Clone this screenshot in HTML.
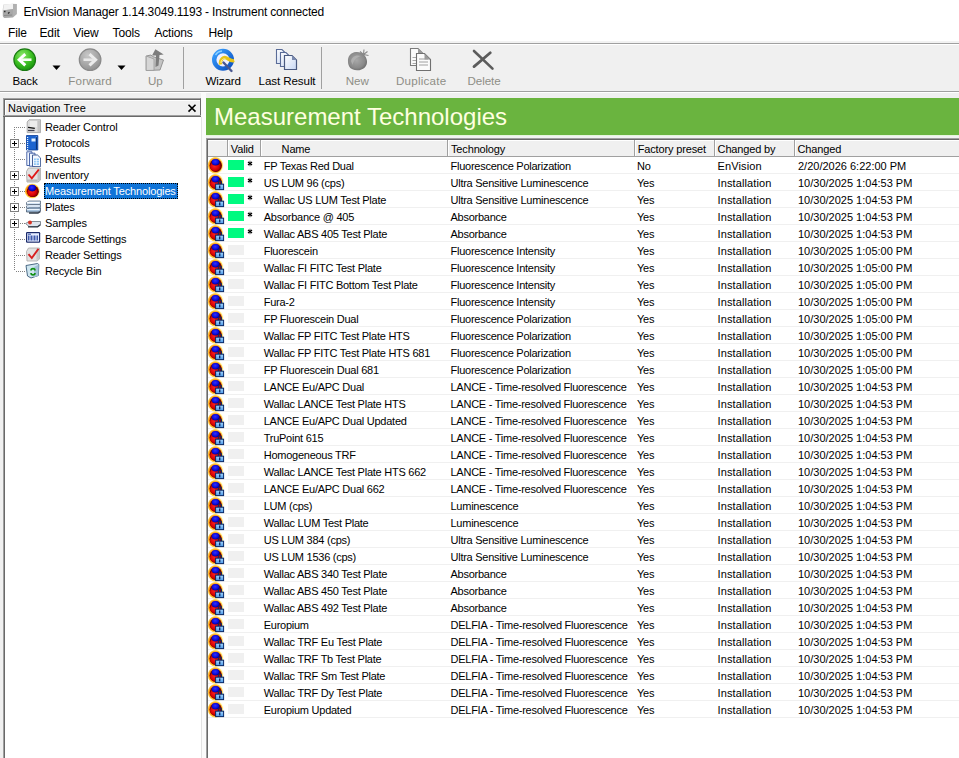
<!DOCTYPE html><html><head><meta charset="utf-8"><style>
*{margin:0;padding:0;box-sizing:border-box}
html,body{width:959px;height:758px;overflow:hidden;background:#f0f0f0;font-family:"Liberation Sans",sans-serif;color:#000}
.a{position:absolute}
.t{position:absolute;white-space:nowrap;line-height:1}
#title{left:0;top:0;width:959px;height:43px;background:#fff}
#tline{left:0;top:43px;width:959px;height:1px;background:#a0a0a0}
#tb{left:0;top:44px;width:959px;height:47px;background:#f0f0f0}
#tbline{left:0;top:91px;width:959px;height:1px;background:#a0a0a0}
.sep{position:absolute;top:47px;width:1px;height:42px;background:#a0a0a0}
.lbl{font-size:11.6px;top:75px;letter-spacing:-0.1px}
.dis{color:#8e8e86}
.tree{font-size:11px;letter-spacing:-0.15px}
.g{font-size:11px;letter-spacing:-0.25px}
.gd{font-size:11px;letter-spacing:0px}
.gt{font-size:11px;letter-spacing:-0.25px}
.gb{font-size:11px;letter-spacing:0.1px}
.rl{position:absolute;left:208px;width:751px;height:1px;background:#f0f0f0}
.hs{position:absolute;top:140px;width:1px;height:16px;background:#d5d5d5}
.vs{position:absolute;width:16px;height:10px}
</style></head><body>
<svg width="0" height="0" style="position:absolute"><defs>
<radialGradient id="glow" cx="45%" cy="50%" r="50%"><stop offset="0.55" stop-color="#ff6000"/><stop offset="0.74" stop-color="#ff9a10"/><stop offset="0.88" stop-color="#ffd040" stop-opacity="0.9"/><stop offset="1" stop-color="#ffee90" stop-opacity="0.15"/></radialGradient>
<radialGradient id="red" cx="40%" cy="45%" r="60%"><stop offset="0" stop-color="#ff2020"/><stop offset="0.7" stop-color="#d00000"/><stop offset="1" stop-color="#700000"/></radialGradient>
<radialGradient id="blue" cx="45%" cy="40%" r="60%"><stop offset="0" stop-color="#3030ff"/><stop offset="0.7" stop-color="#0808d8"/><stop offset="1" stop-color="#000070"/></radialGradient>
<linearGradient id="lockg" x1="0" y1="0" x2="0" y2="1"><stop offset="0" stop-color="#a8d8ff"/><stop offset="1" stop-color="#4a98e8"/></linearGradient>
</defs></svg>
<div id="title" class="a"></div><div class="a" style="left:0;top:41px;width:959px;height:2px;background:#f2f2f2"></div><div id="tline" class="a"></div><div class="a" style="left:0;top:44px;width:959px;height:1px;background:#fff;z-index:1"></div>
<svg class="a" style="left:0px;top:0px" width="20" height="20" viewBox="0 0 20 20"><path d="M3.5 4.5 L13 3.8 L16.8 4 V14 L13 17.5 L4 18 L2.6 16 V10Z" fill="#cfcfcf"/><path d="M4 4.5 L13 3.8 V9 L3.2 10.2Z" fill="#f2f2f2"/><path d="M13 4 L16.8 4 V14 L13 17.3Z" fill="#b0b0b0"/><path d="M3 10.5 L13 9 V17.3 L4.5 18 L3 16.5Z" fill="#a8a8a8"/><path d="M4 11.5 h1.5 M8 13.5 L9.5 12.2" stroke="#303030" stroke-width="1.3"/><path d="M4 15.5 L12 15" stroke="#8a8a8a" stroke-width="1.2"/></svg>
<div class="t" style="left:23.5px;top:6px;font-size:12px;letter-spacing:-0.17px">EnVision Manager 1.14.3049.1193 - Instrument connected</div>
<div class="t" style="left:8px;top:27px;font-size:12px;letter-spacing:-0.15px">File</div>
<div class="t" style="left:39.5px;top:27px;font-size:12px;letter-spacing:-0.15px">Edit</div>
<div class="t" style="left:73.3px;top:27px;font-size:12px;letter-spacing:-0.15px">View</div>
<div class="t" style="left:112.6px;top:27px;font-size:12px;letter-spacing:-0.15px">Tools</div>
<div class="t" style="left:154.4px;top:27px;font-size:12px;letter-spacing:-0.15px">Actions</div>
<div class="t" style="left:208.4px;top:27px;font-size:12px;letter-spacing:-0.15px">Help</div>
<div id="tb" class="a"></div><div id="tbline" class="a"></div><div class="a" style="left:0;top:92px;width:959px;height:1px;background:#fff"></div>
<div class="sep" style="left:183px"></div><div class="sep" style="left:321px"></div>
<svg class="a" style="left:0px;top:44px" width="180" height="30" viewBox="0 44 180 30">
<defs><radialGradient id="gb" cx="40%" cy="30%" r="75%"><stop offset="0" stop-color="#8ce86a"/><stop offset="0.55" stop-color="#3cbf22"/><stop offset="1" stop-color="#14900a"/></radialGradient>
<radialGradient id="gg" cx="40%" cy="30%" r="75%"><stop offset="0" stop-color="#c8c8c8"/><stop offset="0.6" stop-color="#a6a6a6"/><stop offset="1" stop-color="#8e8e8e"/></radialGradient></defs>
<circle cx="24.7" cy="59.7" r="10.8" fill="url(#gb)" stroke="#1a7a12" stroke-width="1.2"/>
<path d="M25.3 54.2 L19.2 59.7 L25.3 65.4" fill="none" stroke="#fff" stroke-width="3" stroke-linejoin="miter" stroke-linecap="butt"/>
<path d="M21 59.7 H31.5" stroke="#f4fff0" stroke-width="2.6"/>
<circle cx="90.1" cy="59.7" r="10.8" fill="url(#gg)" stroke="#8a8a8a" stroke-width="1.2"/>
<path d="M89.5 54.2 L95.6 59.7 L89.5 65.4" fill="none" stroke="#ececec" stroke-width="3"/>
<path d="M83.5 59.7 H94" stroke="#e8e8e8" stroke-width="2.6"/>
<path d="M52.5 65.5 H60.5 L56.5 70Z" fill="#000"/>
<path d="M117.5 65.5 H125.5 L121.5 70Z" fill="#000"/>
<path d="M146.2 56 L151 55 L152.5 56.5 L163.5 60 L160 70 L146.2 70.5Z" fill="#c4c4c4" stroke="#8c8c8c" stroke-width="0.9"/>
<path d="M146.2 56 L154 59 L154 70.3 L146.2 70.5Z" fill="#d6d6d6" stroke="#9a9a9a" stroke-width="0.8"/>
<path d="M152 55.5 L155.4 49.3 L163.7 54.5 L159.5 55 L158.5 65.5 L155.5 67 L156 55.5Z" fill="#7c7c7c"/>
</svg>
<div class="t lbl" style="left:12.4px">Back</div>
<div class="t lbl dis" style="left:68.3px;letter-spacing:0.15px">Forward</div>
<div class="t lbl dis" style="left:148px">Up</div>
<svg class="a" style="left:200px;top:44px" width="310" height="30" viewBox="200 44 310 30">
<defs><linearGradient id="wz" x1="0" y1="0" x2="1" y2="1"><stop offset="0" stop-color="#3aa0ff"/><stop offset="1" stop-color="#0a4fc0"/></linearGradient>
<linearGradient id="dc" x1="0" y1="0" x2="1" y2="1"><stop offset="0" stop-color="#ffffff"/><stop offset="1" stop-color="#c8d8f4"/></linearGradient>
<radialGradient id="nw" cx="45%" cy="45%" r="60%"><stop offset="0" stop-color="#a8a8a8"/><stop offset="0.7" stop-color="#8a8a8a"/><stop offset="1" stop-color="#6a6a6a"/></radialGradient></defs>
<circle cx="223" cy="59.8" r="8.8" fill="#f0f0ff" stroke="url(#wz)" stroke-width="4.4"/>
<path d="M215.5 55 A8.8 8.8 0 0 1 222 51" fill="none" stroke="#8cd0ff" stroke-width="1.4"/>
<path d="M220.5 64.5 C220 59 223.5 56.5 226.5 58 C229 59.3 231 61.5 234.2 60.5" fill="none" stroke="#e8c418" stroke-width="3.4"/>
<path d="M221 63 C221 60 223 58.3 225.5 59" fill="none" stroke="#fff4a0" stroke-width="1"/>
<path d="M223.5 62.5 L231.5 71" stroke="#4a5890" stroke-width="2.4" stroke-linecap="round"/>
<path d="M276.5 49.5 H282 L285 52.5 V63.5 H276.5Z" fill="url(#dc)" stroke="#5a6c98" stroke-width="1.1"/>
<path d="M280.5 52.5 H286 L289 55.5 V66.5 H280.5Z" fill="url(#dc)" stroke="#5a6c98" stroke-width="1.1"/>
<path d="M284.5 55.5 H292 L296.5 60 V69.5 H284.5Z" fill="url(#dc)" stroke="#4a5a80" stroke-width="1.2"/>
<path d="M292 55.5 V60 H296.5" fill="#7a8ab0"/>
<path d="M348 62 C347.5 56 351 52.5 356 52 C362 51.5 366.5 55.5 367 61 C367.5 66.5 363 70.5 357 70.3 C351 70 348.3 67 348 62Z" fill="url(#nw)"/>
<path d="M351 61 C352 56 357 54.5 361 56 C357 57 353.5 60 352.5 65Z" fill="#b4b4b4" opacity="0.8"/>
<path d="M363.5 54.5 L364 49.5 M363.5 54.5 L367.5 51.5 M363.5 54.5 L368.5 55.5 M363.5 54.5 L360 51.5" stroke="#8a8a8a" stroke-width="1.1"/>
<path d="M410.5 48.5 H418 L423.5 54 V65.5 H410.5Z" fill="#fbfbfb" stroke="#7c7c7c" stroke-width="1.1"/>
<path d="M418 48.5 V54 H423.5" fill="#9a9a9a"/>
<path d="M412.5 57.5h4M412.5 60.5h4M412.5 63.5h4" stroke="#a8a8a8" stroke-width="1"/>
<path d="M416.5 53.5 H424.5 L430.5 59.5 V70.5 H416.5Z" fill="#fbfbfb" stroke="#707070" stroke-width="1.1"/>
<path d="M424.5 53.5 V59.5 H430.5" fill="#9a9a9a"/>
<path d="M419 59h9M419 62h9M419 65h9" stroke="#a0a0a0" stroke-width="1"/>
<path d="M474 51 L492.5 68.6" stroke="#5c5c5c" stroke-width="2.6" stroke-linecap="round"/>
<path d="M490.3 52.8 L474 66.6" stroke="#5c5c5c" stroke-width="2.8" stroke-linecap="round"/>
</svg>
<div class="t lbl" style="left:205.5px">Wizard</div>
<div class="t lbl" style="left:258.6px">Last Result</div>
<div class="t lbl dis" style="left:345.8px">New</div>
<div class="t lbl dis" style="left:395.9px;letter-spacing:0.25px">Duplicate</div>
<div class="t lbl dis" style="left:467.6px">Delete</div>
<div class="a" style="left:201px;top:93px;width:5px;height:665px;background:#fbfbfb"></div>
<div class="a" style="left:3px;top:117px;width:199px;height:641px;background:#fff;border-left:1px solid #a0a0a0;border-right:1px solid #e3e3e3"><div style="position:absolute;left:0;top:0;width:1px;height:100%;background:#696969"></div></div>
<div class="a" style="left:3px;top:98px;width:198px;height:19px;background:#f0f0f0;border-top:1px solid #a0a0a0;border-left:1px solid #a0a0a0;border-right:1px solid #696969"></div>
<div class="a" style="left:4px;top:99px;width:196px;height:1px;background:#696969"></div>
<div class="a" style="left:4px;top:99px;width:1px;height:18px;background:#696969"></div>
<div class="a" style="left:5px;top:100px;width:195px;height:1px;background:#fff"></div>
<div class="a" style="left:5px;top:100px;width:1px;height:15px;background:#fff"></div>
<div class="a" style="left:3px;top:115px;width:198px;height:1px;background:#a0a0a0"></div><div class="a" style="left:3px;top:116px;width:198px;height:1px;background:#696969"></div>
<div class="t" style="left:8px;top:102.5px;font-size:11px;letter-spacing:0.05px">Navigation Tree</div>
<svg class="a" style="left:187px;top:103px" width="10" height="10" viewBox="0 0 10 10"><path d="M1.5 1.8 L8.5 8.6 M8.5 1.8 L1.5 8.6" stroke="#000" stroke-width="1.6"/></svg>
<div class="a" style="left:14px;top:127px;width:1px;height:144px;background-image:linear-gradient(#808080 50%,transparent 50%);background-size:1px 2px"></div>
<div class="a" style="left:16px;top:127px;width:9px;height:1px;background-image:linear-gradient(90deg,#808080 50%,transparent 50%);background-size:2px 1px"></div>
<svg class="a" style="left:25px;top:119px" width="16" height="16" viewBox="0 0 16 16"><path d="M2.2 3 L4 0.8 H15.6 V13.6 H2.2Z" fill="#dedede" stroke="#a4a4a4" stroke-width="0.9"/><path d="M5 2 H12 V8 H5Z" fill="#ececec"/><path d="M12.5 1.5 H15 V13 H12.5Z" fill="#c4c4c4"/><path d="M3 8.4 L9.8 9.4" stroke="#101010" stroke-width="1.3"/><path d="M3 11.5 H9.5" stroke="#404050" stroke-width="1.3"/></svg>
<div class="t tree" style="left:45px;top:122px">Reader Control</div>
<div class="a" style="left:16px;top:143px;width:9px;height:1px;background-image:linear-gradient(90deg,#808080 50%,transparent 50%);background-size:2px 1px"></div>
<div class="a" style="left:10px;top:139px;width:9px;height:9px;background:#fff;border:1px solid #808080"></div>
<div class="a" style="left:12px;top:143px;width:5px;height:1px;background:#000"></div><div class="a" style="left:14px;top:141px;width:1px;height:5px;background:#000"></div>
<svg class="a" style="left:25px;top:135px" width="16" height="16" viewBox="0 0 16 16"><path d="M1.5 0.5 H12.8 V15 H1.5Z" fill="#1c64d0" stroke="#0a3c98" stroke-width="0.8"/><path d="M11.5 1 V14.5" stroke="#0a3478" stroke-width="1.2"/><rect x="2" y="2" width="1.2" height="1" fill="#e8f4ff"/><rect x="2" y="4" width="1.2" height="1" fill="#e8f4ff"/><rect x="2" y="6" width="1.2" height="1" fill="#e8f4ff"/><rect x="2" y="8" width="1.2" height="1" fill="#e8f4ff"/><rect x="2" y="10" width="1.2" height="1" fill="#e8f4ff"/><rect x="2" y="12" width="1.2" height="1" fill="#e8f4ff"/><rect x="2" y="14" width="1.2" height="1" fill="#e8f4ff"/><path d="M6.5 3.5 H10.5 V6.5 H6.5Z" fill="#e0f0ff"/><path d="M10.5 2 L12 1.5" stroke="#5aa0ff"/></svg>
<div class="t tree" style="left:45px;top:138px">Protocols</div>
<div class="a" style="left:16px;top:159px;width:9px;height:1px;background-image:linear-gradient(90deg,#808080 50%,transparent 50%);background-size:2px 1px"></div>
<svg class="a" style="left:25px;top:151px" width="16" height="16" viewBox="0 0 16 16"><path d="M1.8 0.8 H7 V14.5 H1.8Z" fill="#f0f6ff" stroke="#3a58a0" stroke-width="0.9"/><path d="M4.5 2.2 H10 V15.2 H4.5Z" fill="#f0f6ff" stroke="#3a58a0" stroke-width="0.9"/><path d="M7.5 4 H12.5 L15.6 7 V15.6 H7.5Z" fill="#f4f8ff" stroke="#34508c" stroke-width="0.9"/><path d="M9 7.5 H14 V14 H9Z" fill="#8cc4f4"/><path d="M9 9.6h5M9 11.8h5M11.3 7.5v6.5" stroke="#ffffff" stroke-width="0.7"/></svg>
<div class="t tree" style="left:45px;top:154px">Results</div>
<div class="a" style="left:16px;top:175px;width:9px;height:1px;background-image:linear-gradient(90deg,#808080 50%,transparent 50%);background-size:2px 1px"></div>
<div class="a" style="left:10px;top:171px;width:9px;height:9px;background:#fff;border:1px solid #808080"></div>
<div class="a" style="left:12px;top:175px;width:5px;height:1px;background:#000"></div><div class="a" style="left:14px;top:173px;width:1px;height:5px;background:#000"></div>
<svg class="a" style="left:25px;top:167px" width="16" height="16" viewBox="0 0 16 16"><path d="M1.5 4.5 L3.5 1 H15.5 V13 L13 15 H2Z" fill="#e2e2e2" stroke="#a0a0a0" stroke-width="0.8"/><path d="M12.5 1.5 H15.5 V13 L12.5 14Z" fill="#c0c0c0"/><path d="M2 12.5 H12.5 V14.5 H2Z" fill="#b8b8b8"/><path d="M3.5 7.5 L6.8 11.3 L13.8 2.5" fill="none" stroke="#e01818" stroke-width="1.9"/></svg>
<div class="t tree" style="left:45px;top:170px">Inventory</div>
<div class="a" style="left:16px;top:191px;width:9px;height:1px;background-image:linear-gradient(90deg,#808080 50%,transparent 50%);background-size:2px 1px"></div>
<div class="a" style="left:10px;top:187px;width:9px;height:9px;background:#fff;border:1px solid #808080"></div>
<div class="a" style="left:12px;top:191px;width:5px;height:1px;background:#000"></div><div class="a" style="left:14px;top:189px;width:1px;height:5px;background:#000"></div>
<svg class="a" style="left:25px;top:183px" width="16" height="16" viewBox="0 0 16 16"><ellipse cx="7.8" cy="8" rx="8" ry="7.8" fill="url(#glow)"/><ellipse cx="7.8" cy="8.3" rx="6" ry="5.8" fill="#700000"/><ellipse cx="7.8" cy="9.2" rx="5.4" ry="4.6" fill="url(#red)"/><ellipse cx="7.2" cy="5.1" rx="3.8" ry="3.3" fill="url(#blue)"/></svg>
<div class="a" style="left:44px;top:183px;width:134px;height:16px;background:#0f74d8;outline:1px dotted #000;outline-offset:-1px"></div>
<div class="t tree" style="left:45px;top:186px;color:#fff">Measurement Technologies</div>
<div class="a" style="left:16px;top:207px;width:9px;height:1px;background-image:linear-gradient(90deg,#808080 50%,transparent 50%);background-size:2px 1px"></div>
<div class="a" style="left:10px;top:203px;width:9px;height:9px;background:#fff;border:1px solid #808080"></div>
<div class="a" style="left:12px;top:207px;width:5px;height:1px;background:#000"></div><div class="a" style="left:14px;top:205px;width:1px;height:5px;background:#000"></div>
<svg class="a" style="left:25px;top:199px" width="16" height="16" viewBox="0 0 16 16"><path d="M1.5 3.5 L4 2 H15.5 V5 L13 5.8 H1.5Z" fill="#d4e4f4" stroke="#5a6c80" stroke-width="0.8"/><path d="M2 3.5 H14.5" stroke="#ffffff" stroke-width="0.9"/><path d="M1.5 7 L4 5.5 H15.5 V8.5 L13 9.3 H1.5Z" fill="#b8d0ea" stroke="#5a6c80" stroke-width="0.8"/><path d="M2 7 H14.5" stroke="#ffffff" stroke-width="0.9"/><path d="M1.5 10.5 L4 9 H15.5 V12 L13 13 H1.5Z" fill="#a8c4e0" stroke="#4a5a70" stroke-width="0.8"/><path d="M2 10.5 H14.5" stroke="#f0f8ff" stroke-width="0.9"/><path d="M4 14 H13 L15.5 12.5" fill="none" stroke="#303c4c" stroke-width="1.3"/></svg>
<div class="t tree" style="left:45px;top:202px">Plates</div>
<div class="a" style="left:16px;top:223px;width:9px;height:1px;background-image:linear-gradient(90deg,#808080 50%,transparent 50%);background-size:2px 1px"></div>
<div class="a" style="left:10px;top:219px;width:9px;height:9px;background:#fff;border:1px solid #808080"></div>
<div class="a" style="left:12px;top:223px;width:5px;height:1px;background:#000"></div><div class="a" style="left:14px;top:221px;width:1px;height:5px;background:#000"></div>
<svg class="a" style="left:25px;top:215px" width="16" height="16" viewBox="0 0 16 16"><g transform="translate(0,3)"><path d="M0.5 5.5 L4 3.5 H15.5 V6.5 L12.5 8.5 H4Z" fill="#dde4ec" stroke="#6a747e" stroke-width="0.8"/><path d="M3 8.8 H12.5 L15.5 6.8" fill="none" stroke="#2a3440" stroke-width="1.3"/><circle cx="5" cy="4.5" r="1.9" fill="#d83020"/></g></svg>
<div class="t tree" style="left:45px;top:218px">Samples</div>
<div class="a" style="left:16px;top:239px;width:9px;height:1px;background-image:linear-gradient(90deg,#808080 50%,transparent 50%);background-size:2px 1px"></div>
<svg class="a" style="left:25px;top:231px" width="16" height="16" viewBox="0 0 16 16"><rect x="1" y="1" width="14.2" height="10.8" rx="1.2" fill="#1a2a6a"/><rect x="2.2" y="2.2" width="11.8" height="8.4" fill="#e4ecff"/><path d="M3.5 4.5v5M5 4.5v5M6.5 4.5v5M8 4.5v5M9.5 4.5v5M11 4.5v5M12.5 4.5v5" stroke="#2a48a0" stroke-width="0.9"/><path d="M3 3.2h3" stroke="#2a48a0"/></svg>
<div class="t tree" style="left:45px;top:234px">Barcode Settings</div>
<div class="a" style="left:16px;top:255px;width:9px;height:1px;background-image:linear-gradient(90deg,#808080 50%,transparent 50%);background-size:2px 1px"></div>
<svg class="a" style="left:25px;top:247px" width="16" height="16" viewBox="0 0 16 16"><path d="M1.5 4.5 L3.5 1 H14.5 V12 L12 14 H2Z" fill="#e2e2e2" stroke="#a8a8a8" stroke-width="0.8"/><path d="M11.5 1.5 H14.5 V12 L11.5 13Z" fill="#c8c8c8"/><path d="M3.5 7.2 L6.8 11 L13.5 1.8" fill="none" stroke="#d82020" stroke-width="1.9"/></svg>
<div class="t tree" style="left:45px;top:250px">Reader Settings</div>
<div class="a" style="left:16px;top:271px;width:9px;height:1px;background-image:linear-gradient(90deg,#808080 50%,transparent 50%);background-size:2px 1px"></div>
<svg class="a" style="left:25px;top:263px" width="16" height="16" viewBox="0 0 16 16"><path d="M1 2.5 L12.5 0.5 L13.8 1.5 L13.4 12.5 L6 15 L2.5 13Z" fill="#cfe6f0" stroke="#3a5a78" stroke-width="0.9"/><path d="M9 4 L13.5 1.5 V12.5 L9 14.5Z" fill="#a4c4d8"/><path d="M6 7.5 C6 5 10 5 10 7.5 M10 10 C10 12.5 6 12.5 6 10" fill="none" stroke="#109010" stroke-width="1.6"/></svg>
<div class="t tree" style="left:45px;top:266px">Recycle Bin</div>
<div class="a" style="left:206px;top:98px;width:753px;height:37px;background:#6ab43f"></div>
<div class="t" style="left:214px;top:105px;font-size:24px;color:#ffffe0">Measurement Technologies</div>
<div class="a" style="left:206px;top:138px;width:753px;height:620px;background:#fff;border-left:1px solid #a0a0a0;border-top:1px solid #a0a0a0"></div>
<div class="a" style="left:207px;top:139px;width:752px;height:1px;background:#696969"></div><div class="a" style="left:207px;top:139px;width:1px;height:619px;background:#696969"></div>
<div class="a" style="left:206px;top:135px;width:753px;height:1px;background:#e6f6dc"></div><div class="a" style="left:206px;top:136px;width:753px;height:2px;background:#f2f2f2"></div>
<div class="a" style="left:208px;top:140px;width:751px;height:16px;background:#f0f0f0;border-top:1px solid #fff"></div>
<div class="a" style="left:208px;top:156px;width:751px;height:1px;background:#a0a0a0"></div>
<div class="hs" style="left:227px;background:#a0a0a0"></div><div class="hs" style="left:228px;background:#fff"></div>
<div class="hs" style="left:260px;background:#a0a0a0"></div><div class="hs" style="left:261px;background:#fff"></div>
<div class="hs" style="left:447px;background:#a0a0a0"></div><div class="hs" style="left:448px;background:#fff"></div>
<div class="hs" style="left:634px;background:#a0a0a0"></div><div class="hs" style="left:635px;background:#fff"></div>
<div class="hs" style="left:714px;background:#a0a0a0"></div><div class="hs" style="left:715px;background:#fff"></div>
<div class="hs" style="left:794px;background:#a0a0a0"></div><div class="hs" style="left:795px;background:#fff"></div>
<div class="t g" style="left:230.8px;top:144px;letter-spacing:-0.15px">Valid</div>
<div class="t g" style="left:281.6px;top:144px;letter-spacing:-0.15px">Name</div>
<div class="t g" style="left:451px;top:144px;letter-spacing:-0.15px">Technology</div>
<div class="t g" style="left:637.7px;top:144px;letter-spacing:-0.15px">Factory preset</div>
<div class="t g" style="left:717.6px;top:144px;letter-spacing:-0.15px">Changed by</div>
<div class="t g" style="left:797.5px;top:144px;letter-spacing:-0.15px">Changed</div>
<div class="rl" style="top:173px"></div>
<svg class="a" style="left:207px;top:157px;overflow:visible" width="17" height="16" viewBox="0 0 17 16"><ellipse cx="9" cy="8.3" rx="8.2" ry="8.8" fill="url(#glow)"/><ellipse cx="8.8" cy="8.6" rx="6.2" ry="6.3" fill="#700000"/><ellipse cx="8.6" cy="9.6" rx="5.5" ry="4.9" fill="url(#red)"/><ellipse cx="8.6" cy="5.3" rx="3.9" ry="3.3" fill="url(#blue)"/></svg>
<div class="vs" style="left:228px;top:160px;background:#00fa80"></div>
<svg class="a" style="left:246px;top:159px" width="8" height="9" viewBox="0 0 8 9"><path d="M4 1.8 V7.2" stroke="#707070" stroke-width="1.2"/><path d="M2 3 L6 6 M6 3 L2 6" stroke="#000" stroke-width="1.4"/></svg>
<div class="t g" style="left:263.7px;top:161px">FP Texas Red Dual</div>
<div class="t gt" style="left:450.5px;top:161px">Fluorescence Polarization</div>
<div class="t g" style="left:637px;top:161px">No</div>
<div class="t gb" style="left:717.6px;top:161px">EnVision</div>
<div class="t gd" style="left:798px;top:161px">2/20/2026 6:22:00 PM</div>
<div class="rl" style="top:190px"></div>
<svg class="a" style="left:207px;top:174px;overflow:visible" width="17" height="16" viewBox="0 0 17 16"><ellipse cx="9" cy="8.3" rx="8.2" ry="8.8" fill="url(#glow)"/><ellipse cx="8.8" cy="8.6" rx="6.2" ry="6.3" fill="#700000"/><ellipse cx="8.6" cy="9.6" rx="5.5" ry="4.9" fill="url(#red)"/><ellipse cx="8.6" cy="5.3" rx="3.9" ry="3.3" fill="url(#blue)"/><path d="M11.3 10.2V8.9a1.65 1.65 0 0 1 3.3 0V10.2" fill="none" stroke="#0a2a66" stroke-width="1.1"/><rect x="8.6" y="10.2" width="8" height="5.4" fill="url(#lockg)" stroke="#082868" stroke-width="1"/><rect x="12" y="11.4" width="1.4" height="3" fill="#0a2a66"/></svg>
<div class="vs" style="left:228px;top:177px;background:#00fa80"></div>
<svg class="a" style="left:246px;top:176px" width="8" height="9" viewBox="0 0 8 9"><path d="M4 1.8 V7.2" stroke="#707070" stroke-width="1.2"/><path d="M2 3 L6 6 M6 3 L2 6" stroke="#000" stroke-width="1.4"/></svg>
<div class="t g" style="left:263.7px;top:178px">US LUM 96 (cps)</div>
<div class="t gt" style="left:450.5px;top:178px">Ultra Sensitive Luminescence</div>
<div class="t g" style="left:637px;top:178px">Yes</div>
<div class="t gb" style="left:717.6px;top:178px">Installation</div>
<div class="t gd" style="left:798px;top:178px">10/30/2025 1:04:53 PM</div>
<div class="rl" style="top:207px"></div>
<svg class="a" style="left:207px;top:191px;overflow:visible" width="17" height="16" viewBox="0 0 17 16"><ellipse cx="9" cy="8.3" rx="8.2" ry="8.8" fill="url(#glow)"/><ellipse cx="8.8" cy="8.6" rx="6.2" ry="6.3" fill="#700000"/><ellipse cx="8.6" cy="9.6" rx="5.5" ry="4.9" fill="url(#red)"/><ellipse cx="8.6" cy="5.3" rx="3.9" ry="3.3" fill="url(#blue)"/><path d="M11.3 10.2V8.9a1.65 1.65 0 0 1 3.3 0V10.2" fill="none" stroke="#0a2a66" stroke-width="1.1"/><rect x="8.6" y="10.2" width="8" height="5.4" fill="url(#lockg)" stroke="#082868" stroke-width="1"/><rect x="12" y="11.4" width="1.4" height="3" fill="#0a2a66"/></svg>
<div class="vs" style="left:228px;top:194px;background:#00fa80"></div>
<svg class="a" style="left:246px;top:193px" width="8" height="9" viewBox="0 0 8 9"><path d="M4 1.8 V7.2" stroke="#707070" stroke-width="1.2"/><path d="M2 3 L6 6 M6 3 L2 6" stroke="#000" stroke-width="1.4"/></svg>
<div class="t g" style="left:263.7px;top:195px">Wallac US LUM Test Plate</div>
<div class="t gt" style="left:450.5px;top:195px">Ultra Sensitive Luminescence</div>
<div class="t g" style="left:637px;top:195px">Yes</div>
<div class="t gb" style="left:717.6px;top:195px">Installation</div>
<div class="t gd" style="left:798px;top:195px">10/30/2025 1:04:53 PM</div>
<div class="rl" style="top:224px"></div>
<svg class="a" style="left:207px;top:208px;overflow:visible" width="17" height="16" viewBox="0 0 17 16"><ellipse cx="9" cy="8.3" rx="8.2" ry="8.8" fill="url(#glow)"/><ellipse cx="8.8" cy="8.6" rx="6.2" ry="6.3" fill="#700000"/><ellipse cx="8.6" cy="9.6" rx="5.5" ry="4.9" fill="url(#red)"/><ellipse cx="8.6" cy="5.3" rx="3.9" ry="3.3" fill="url(#blue)"/><path d="M11.3 10.2V8.9a1.65 1.65 0 0 1 3.3 0V10.2" fill="none" stroke="#0a2a66" stroke-width="1.1"/><rect x="8.6" y="10.2" width="8" height="5.4" fill="url(#lockg)" stroke="#082868" stroke-width="1"/><rect x="12" y="11.4" width="1.4" height="3" fill="#0a2a66"/></svg>
<div class="vs" style="left:228px;top:211px;background:#00fa80"></div>
<svg class="a" style="left:246px;top:210px" width="8" height="9" viewBox="0 0 8 9"><path d="M4 1.8 V7.2" stroke="#707070" stroke-width="1.2"/><path d="M2 3 L6 6 M6 3 L2 6" stroke="#000" stroke-width="1.4"/></svg>
<div class="t g" style="left:263.7px;top:212px">Absorbance @ 405</div>
<div class="t gt" style="left:450.5px;top:212px">Absorbance</div>
<div class="t g" style="left:637px;top:212px">Yes</div>
<div class="t gb" style="left:717.6px;top:212px">Installation</div>
<div class="t gd" style="left:798px;top:212px">10/30/2025 1:04:53 PM</div>
<div class="rl" style="top:241px"></div>
<svg class="a" style="left:207px;top:225px;overflow:visible" width="17" height="16" viewBox="0 0 17 16"><ellipse cx="9" cy="8.3" rx="8.2" ry="8.8" fill="url(#glow)"/><ellipse cx="8.8" cy="8.6" rx="6.2" ry="6.3" fill="#700000"/><ellipse cx="8.6" cy="9.6" rx="5.5" ry="4.9" fill="url(#red)"/><ellipse cx="8.6" cy="5.3" rx="3.9" ry="3.3" fill="url(#blue)"/><path d="M11.3 10.2V8.9a1.65 1.65 0 0 1 3.3 0V10.2" fill="none" stroke="#0a2a66" stroke-width="1.1"/><rect x="8.6" y="10.2" width="8" height="5.4" fill="url(#lockg)" stroke="#082868" stroke-width="1"/><rect x="12" y="11.4" width="1.4" height="3" fill="#0a2a66"/></svg>
<div class="vs" style="left:228px;top:228px;background:#00fa80"></div>
<svg class="a" style="left:246px;top:227px" width="8" height="9" viewBox="0 0 8 9"><path d="M4 1.8 V7.2" stroke="#707070" stroke-width="1.2"/><path d="M2 3 L6 6 M6 3 L2 6" stroke="#000" stroke-width="1.4"/></svg>
<div class="t g" style="left:263.7px;top:229px">Wallac ABS 405 Test Plate</div>
<div class="t gt" style="left:450.5px;top:229px">Absorbance</div>
<div class="t g" style="left:637px;top:229px">Yes</div>
<div class="t gb" style="left:717.6px;top:229px">Installation</div>
<div class="t gd" style="left:798px;top:229px">10/30/2025 1:04:53 PM</div>
<div class="rl" style="top:258px"></div>
<svg class="a" style="left:207px;top:242px;overflow:visible" width="17" height="16" viewBox="0 0 17 16"><ellipse cx="9" cy="8.3" rx="8.2" ry="8.8" fill="url(#glow)"/><ellipse cx="8.8" cy="8.6" rx="6.2" ry="6.3" fill="#700000"/><ellipse cx="8.6" cy="9.6" rx="5.5" ry="4.9" fill="url(#red)"/><ellipse cx="8.6" cy="5.3" rx="3.9" ry="3.3" fill="url(#blue)"/><path d="M11.3 10.2V8.9a1.65 1.65 0 0 1 3.3 0V10.2" fill="none" stroke="#0a2a66" stroke-width="1.1"/><rect x="8.6" y="10.2" width="8" height="5.4" fill="url(#lockg)" stroke="#082868" stroke-width="1"/><rect x="12" y="11.4" width="1.4" height="3" fill="#0a2a66"/></svg>
<div class="vs" style="left:228px;top:245px;background:#f0f0f0"></div>
<div class="t g" style="left:263.7px;top:246px">Fluorescein</div>
<div class="t gt" style="left:450.5px;top:246px">Fluorescence Intensity</div>
<div class="t g" style="left:637px;top:246px">Yes</div>
<div class="t gb" style="left:717.6px;top:246px">Installation</div>
<div class="t gd" style="left:798px;top:246px">10/30/2025 1:05:00 PM</div>
<div class="rl" style="top:275px"></div>
<svg class="a" style="left:207px;top:259px;overflow:visible" width="17" height="16" viewBox="0 0 17 16"><ellipse cx="9" cy="8.3" rx="8.2" ry="8.8" fill="url(#glow)"/><ellipse cx="8.8" cy="8.6" rx="6.2" ry="6.3" fill="#700000"/><ellipse cx="8.6" cy="9.6" rx="5.5" ry="4.9" fill="url(#red)"/><ellipse cx="8.6" cy="5.3" rx="3.9" ry="3.3" fill="url(#blue)"/><path d="M11.3 10.2V8.9a1.65 1.65 0 0 1 3.3 0V10.2" fill="none" stroke="#0a2a66" stroke-width="1.1"/><rect x="8.6" y="10.2" width="8" height="5.4" fill="url(#lockg)" stroke="#082868" stroke-width="1"/><rect x="12" y="11.4" width="1.4" height="3" fill="#0a2a66"/></svg>
<div class="vs" style="left:228px;top:262px;background:#f0f0f0"></div>
<div class="t g" style="left:263.7px;top:263px">Wallac FI FITC Test Plate</div>
<div class="t gt" style="left:450.5px;top:263px">Fluorescence Intensity</div>
<div class="t g" style="left:637px;top:263px">Yes</div>
<div class="t gb" style="left:717.6px;top:263px">Installation</div>
<div class="t gd" style="left:798px;top:263px">10/30/2025 1:05:00 PM</div>
<div class="rl" style="top:292px"></div>
<svg class="a" style="left:207px;top:276px;overflow:visible" width="17" height="16" viewBox="0 0 17 16"><ellipse cx="9" cy="8.3" rx="8.2" ry="8.8" fill="url(#glow)"/><ellipse cx="8.8" cy="8.6" rx="6.2" ry="6.3" fill="#700000"/><ellipse cx="8.6" cy="9.6" rx="5.5" ry="4.9" fill="url(#red)"/><ellipse cx="8.6" cy="5.3" rx="3.9" ry="3.3" fill="url(#blue)"/><path d="M11.3 10.2V8.9a1.65 1.65 0 0 1 3.3 0V10.2" fill="none" stroke="#0a2a66" stroke-width="1.1"/><rect x="8.6" y="10.2" width="8" height="5.4" fill="url(#lockg)" stroke="#082868" stroke-width="1"/><rect x="12" y="11.4" width="1.4" height="3" fill="#0a2a66"/></svg>
<div class="vs" style="left:228px;top:279px;background:#f0f0f0"></div>
<div class="t g" style="left:263.7px;top:280px">Wallac FI FITC Bottom Test Plate</div>
<div class="t gt" style="left:450.5px;top:280px">Fluorescence Intensity</div>
<div class="t g" style="left:637px;top:280px">Yes</div>
<div class="t gb" style="left:717.6px;top:280px">Installation</div>
<div class="t gd" style="left:798px;top:280px">10/30/2025 1:05:00 PM</div>
<div class="rl" style="top:309px"></div>
<svg class="a" style="left:207px;top:293px;overflow:visible" width="17" height="16" viewBox="0 0 17 16"><ellipse cx="9" cy="8.3" rx="8.2" ry="8.8" fill="url(#glow)"/><ellipse cx="8.8" cy="8.6" rx="6.2" ry="6.3" fill="#700000"/><ellipse cx="8.6" cy="9.6" rx="5.5" ry="4.9" fill="url(#red)"/><ellipse cx="8.6" cy="5.3" rx="3.9" ry="3.3" fill="url(#blue)"/><path d="M11.3 10.2V8.9a1.65 1.65 0 0 1 3.3 0V10.2" fill="none" stroke="#0a2a66" stroke-width="1.1"/><rect x="8.6" y="10.2" width="8" height="5.4" fill="url(#lockg)" stroke="#082868" stroke-width="1"/><rect x="12" y="11.4" width="1.4" height="3" fill="#0a2a66"/></svg>
<div class="vs" style="left:228px;top:296px;background:#f0f0f0"></div>
<div class="t g" style="left:263.7px;top:297px">Fura-2</div>
<div class="t gt" style="left:450.5px;top:297px">Fluorescence Intensity</div>
<div class="t g" style="left:637px;top:297px">Yes</div>
<div class="t gb" style="left:717.6px;top:297px">Installation</div>
<div class="t gd" style="left:798px;top:297px">10/30/2025 1:05:00 PM</div>
<div class="rl" style="top:326px"></div>
<svg class="a" style="left:207px;top:310px;overflow:visible" width="17" height="16" viewBox="0 0 17 16"><ellipse cx="9" cy="8.3" rx="8.2" ry="8.8" fill="url(#glow)"/><ellipse cx="8.8" cy="8.6" rx="6.2" ry="6.3" fill="#700000"/><ellipse cx="8.6" cy="9.6" rx="5.5" ry="4.9" fill="url(#red)"/><ellipse cx="8.6" cy="5.3" rx="3.9" ry="3.3" fill="url(#blue)"/><path d="M11.3 10.2V8.9a1.65 1.65 0 0 1 3.3 0V10.2" fill="none" stroke="#0a2a66" stroke-width="1.1"/><rect x="8.6" y="10.2" width="8" height="5.4" fill="url(#lockg)" stroke="#082868" stroke-width="1"/><rect x="12" y="11.4" width="1.4" height="3" fill="#0a2a66"/></svg>
<div class="vs" style="left:228px;top:313px;background:#f0f0f0"></div>
<div class="t g" style="left:263.7px;top:314px">FP Fluorescein Dual</div>
<div class="t gt" style="left:450.5px;top:314px">Fluorescence Polarization</div>
<div class="t g" style="left:637px;top:314px">Yes</div>
<div class="t gb" style="left:717.6px;top:314px">Installation</div>
<div class="t gd" style="left:798px;top:314px">10/30/2025 1:05:00 PM</div>
<div class="rl" style="top:343px"></div>
<svg class="a" style="left:207px;top:327px;overflow:visible" width="17" height="16" viewBox="0 0 17 16"><ellipse cx="9" cy="8.3" rx="8.2" ry="8.8" fill="url(#glow)"/><ellipse cx="8.8" cy="8.6" rx="6.2" ry="6.3" fill="#700000"/><ellipse cx="8.6" cy="9.6" rx="5.5" ry="4.9" fill="url(#red)"/><ellipse cx="8.6" cy="5.3" rx="3.9" ry="3.3" fill="url(#blue)"/><path d="M11.3 10.2V8.9a1.65 1.65 0 0 1 3.3 0V10.2" fill="none" stroke="#0a2a66" stroke-width="1.1"/><rect x="8.6" y="10.2" width="8" height="5.4" fill="url(#lockg)" stroke="#082868" stroke-width="1"/><rect x="12" y="11.4" width="1.4" height="3" fill="#0a2a66"/></svg>
<div class="vs" style="left:228px;top:330px;background:#f0f0f0"></div>
<div class="t g" style="left:263.7px;top:331px">Wallac FP FITC Test Plate HTS</div>
<div class="t gt" style="left:450.5px;top:331px">Fluorescence Polarization</div>
<div class="t g" style="left:637px;top:331px">Yes</div>
<div class="t gb" style="left:717.6px;top:331px">Installation</div>
<div class="t gd" style="left:798px;top:331px">10/30/2025 1:05:00 PM</div>
<div class="rl" style="top:360px"></div>
<svg class="a" style="left:207px;top:344px;overflow:visible" width="17" height="16" viewBox="0 0 17 16"><ellipse cx="9" cy="8.3" rx="8.2" ry="8.8" fill="url(#glow)"/><ellipse cx="8.8" cy="8.6" rx="6.2" ry="6.3" fill="#700000"/><ellipse cx="8.6" cy="9.6" rx="5.5" ry="4.9" fill="url(#red)"/><ellipse cx="8.6" cy="5.3" rx="3.9" ry="3.3" fill="url(#blue)"/><path d="M11.3 10.2V8.9a1.65 1.65 0 0 1 3.3 0V10.2" fill="none" stroke="#0a2a66" stroke-width="1.1"/><rect x="8.6" y="10.2" width="8" height="5.4" fill="url(#lockg)" stroke="#082868" stroke-width="1"/><rect x="12" y="11.4" width="1.4" height="3" fill="#0a2a66"/></svg>
<div class="vs" style="left:228px;top:347px;background:#f0f0f0"></div>
<div class="t g" style="left:263.7px;top:348px">Wallac FP FITC Test Plate HTS 681</div>
<div class="t gt" style="left:450.5px;top:348px">Fluorescence Polarization</div>
<div class="t g" style="left:637px;top:348px">Yes</div>
<div class="t gb" style="left:717.6px;top:348px">Installation</div>
<div class="t gd" style="left:798px;top:348px">10/30/2025 1:05:00 PM</div>
<div class="rl" style="top:377px"></div>
<svg class="a" style="left:207px;top:361px;overflow:visible" width="17" height="16" viewBox="0 0 17 16"><ellipse cx="9" cy="8.3" rx="8.2" ry="8.8" fill="url(#glow)"/><ellipse cx="8.8" cy="8.6" rx="6.2" ry="6.3" fill="#700000"/><ellipse cx="8.6" cy="9.6" rx="5.5" ry="4.9" fill="url(#red)"/><ellipse cx="8.6" cy="5.3" rx="3.9" ry="3.3" fill="url(#blue)"/><path d="M11.3 10.2V8.9a1.65 1.65 0 0 1 3.3 0V10.2" fill="none" stroke="#0a2a66" stroke-width="1.1"/><rect x="8.6" y="10.2" width="8" height="5.4" fill="url(#lockg)" stroke="#082868" stroke-width="1"/><rect x="12" y="11.4" width="1.4" height="3" fill="#0a2a66"/></svg>
<div class="vs" style="left:228px;top:364px;background:#f0f0f0"></div>
<div class="t g" style="left:263.7px;top:365px">FP Fluorescein Dual 681</div>
<div class="t gt" style="left:450.5px;top:365px">Fluorescence Polarization</div>
<div class="t g" style="left:637px;top:365px">Yes</div>
<div class="t gb" style="left:717.6px;top:365px">Installation</div>
<div class="t gd" style="left:798px;top:365px">10/30/2025 1:05:00 PM</div>
<div class="rl" style="top:394px"></div>
<svg class="a" style="left:207px;top:378px;overflow:visible" width="17" height="16" viewBox="0 0 17 16"><ellipse cx="9" cy="8.3" rx="8.2" ry="8.8" fill="url(#glow)"/><ellipse cx="8.8" cy="8.6" rx="6.2" ry="6.3" fill="#700000"/><ellipse cx="8.6" cy="9.6" rx="5.5" ry="4.9" fill="url(#red)"/><ellipse cx="8.6" cy="5.3" rx="3.9" ry="3.3" fill="url(#blue)"/><path d="M11.3 10.2V8.9a1.65 1.65 0 0 1 3.3 0V10.2" fill="none" stroke="#0a2a66" stroke-width="1.1"/><rect x="8.6" y="10.2" width="8" height="5.4" fill="url(#lockg)" stroke="#082868" stroke-width="1"/><rect x="12" y="11.4" width="1.4" height="3" fill="#0a2a66"/></svg>
<div class="vs" style="left:228px;top:381px;background:#f0f0f0"></div>
<div class="t g" style="left:263.7px;top:382px">LANCE Eu/APC Dual</div>
<div class="t gt" style="left:450.5px;top:382px">LANCE - Time-resolved Fluorescence</div>
<div class="t g" style="left:637px;top:382px">Yes</div>
<div class="t gb" style="left:717.6px;top:382px">Installation</div>
<div class="t gd" style="left:798px;top:382px">10/30/2025 1:04:53 PM</div>
<div class="rl" style="top:411px"></div>
<svg class="a" style="left:207px;top:395px;overflow:visible" width="17" height="16" viewBox="0 0 17 16"><ellipse cx="9" cy="8.3" rx="8.2" ry="8.8" fill="url(#glow)"/><ellipse cx="8.8" cy="8.6" rx="6.2" ry="6.3" fill="#700000"/><ellipse cx="8.6" cy="9.6" rx="5.5" ry="4.9" fill="url(#red)"/><ellipse cx="8.6" cy="5.3" rx="3.9" ry="3.3" fill="url(#blue)"/><path d="M11.3 10.2V8.9a1.65 1.65 0 0 1 3.3 0V10.2" fill="none" stroke="#0a2a66" stroke-width="1.1"/><rect x="8.6" y="10.2" width="8" height="5.4" fill="url(#lockg)" stroke="#082868" stroke-width="1"/><rect x="12" y="11.4" width="1.4" height="3" fill="#0a2a66"/></svg>
<div class="vs" style="left:228px;top:398px;background:#f0f0f0"></div>
<div class="t g" style="left:263.7px;top:399px">Wallac LANCE Test Plate HTS</div>
<div class="t gt" style="left:450.5px;top:399px">LANCE - Time-resolved Fluorescence</div>
<div class="t g" style="left:637px;top:399px">Yes</div>
<div class="t gb" style="left:717.6px;top:399px">Installation</div>
<div class="t gd" style="left:798px;top:399px">10/30/2025 1:04:53 PM</div>
<div class="rl" style="top:428px"></div>
<svg class="a" style="left:207px;top:412px;overflow:visible" width="17" height="16" viewBox="0 0 17 16"><ellipse cx="9" cy="8.3" rx="8.2" ry="8.8" fill="url(#glow)"/><ellipse cx="8.8" cy="8.6" rx="6.2" ry="6.3" fill="#700000"/><ellipse cx="8.6" cy="9.6" rx="5.5" ry="4.9" fill="url(#red)"/><ellipse cx="8.6" cy="5.3" rx="3.9" ry="3.3" fill="url(#blue)"/><path d="M11.3 10.2V8.9a1.65 1.65 0 0 1 3.3 0V10.2" fill="none" stroke="#0a2a66" stroke-width="1.1"/><rect x="8.6" y="10.2" width="8" height="5.4" fill="url(#lockg)" stroke="#082868" stroke-width="1"/><rect x="12" y="11.4" width="1.4" height="3" fill="#0a2a66"/></svg>
<div class="vs" style="left:228px;top:415px;background:#f0f0f0"></div>
<div class="t g" style="left:263.7px;top:416px">LANCE Eu/APC Dual Updated</div>
<div class="t gt" style="left:450.5px;top:416px">LANCE - Time-resolved Fluorescence</div>
<div class="t g" style="left:637px;top:416px">Yes</div>
<div class="t gb" style="left:717.6px;top:416px">Installation</div>
<div class="t gd" style="left:798px;top:416px">10/30/2025 1:04:53 PM</div>
<div class="rl" style="top:445px"></div>
<svg class="a" style="left:207px;top:429px;overflow:visible" width="17" height="16" viewBox="0 0 17 16"><ellipse cx="9" cy="8.3" rx="8.2" ry="8.8" fill="url(#glow)"/><ellipse cx="8.8" cy="8.6" rx="6.2" ry="6.3" fill="#700000"/><ellipse cx="8.6" cy="9.6" rx="5.5" ry="4.9" fill="url(#red)"/><ellipse cx="8.6" cy="5.3" rx="3.9" ry="3.3" fill="url(#blue)"/><path d="M11.3 10.2V8.9a1.65 1.65 0 0 1 3.3 0V10.2" fill="none" stroke="#0a2a66" stroke-width="1.1"/><rect x="8.6" y="10.2" width="8" height="5.4" fill="url(#lockg)" stroke="#082868" stroke-width="1"/><rect x="12" y="11.4" width="1.4" height="3" fill="#0a2a66"/></svg>
<div class="vs" style="left:228px;top:432px;background:#f0f0f0"></div>
<div class="t g" style="left:263.7px;top:433px">TruPoint 615</div>
<div class="t gt" style="left:450.5px;top:433px">LANCE - Time-resolved Fluorescence</div>
<div class="t g" style="left:637px;top:433px">Yes</div>
<div class="t gb" style="left:717.6px;top:433px">Installation</div>
<div class="t gd" style="left:798px;top:433px">10/30/2025 1:04:53 PM</div>
<div class="rl" style="top:462px"></div>
<svg class="a" style="left:207px;top:446px;overflow:visible" width="17" height="16" viewBox="0 0 17 16"><ellipse cx="9" cy="8.3" rx="8.2" ry="8.8" fill="url(#glow)"/><ellipse cx="8.8" cy="8.6" rx="6.2" ry="6.3" fill="#700000"/><ellipse cx="8.6" cy="9.6" rx="5.5" ry="4.9" fill="url(#red)"/><ellipse cx="8.6" cy="5.3" rx="3.9" ry="3.3" fill="url(#blue)"/><path d="M11.3 10.2V8.9a1.65 1.65 0 0 1 3.3 0V10.2" fill="none" stroke="#0a2a66" stroke-width="1.1"/><rect x="8.6" y="10.2" width="8" height="5.4" fill="url(#lockg)" stroke="#082868" stroke-width="1"/><rect x="12" y="11.4" width="1.4" height="3" fill="#0a2a66"/></svg>
<div class="vs" style="left:228px;top:449px;background:#f0f0f0"></div>
<div class="t g" style="left:263.7px;top:450px">Homogeneous TRF</div>
<div class="t gt" style="left:450.5px;top:450px">LANCE - Time-resolved Fluorescence</div>
<div class="t g" style="left:637px;top:450px">Yes</div>
<div class="t gb" style="left:717.6px;top:450px">Installation</div>
<div class="t gd" style="left:798px;top:450px">10/30/2025 1:04:53 PM</div>
<div class="rl" style="top:479px"></div>
<svg class="a" style="left:207px;top:463px;overflow:visible" width="17" height="16" viewBox="0 0 17 16"><ellipse cx="9" cy="8.3" rx="8.2" ry="8.8" fill="url(#glow)"/><ellipse cx="8.8" cy="8.6" rx="6.2" ry="6.3" fill="#700000"/><ellipse cx="8.6" cy="9.6" rx="5.5" ry="4.9" fill="url(#red)"/><ellipse cx="8.6" cy="5.3" rx="3.9" ry="3.3" fill="url(#blue)"/><path d="M11.3 10.2V8.9a1.65 1.65 0 0 1 3.3 0V10.2" fill="none" stroke="#0a2a66" stroke-width="1.1"/><rect x="8.6" y="10.2" width="8" height="5.4" fill="url(#lockg)" stroke="#082868" stroke-width="1"/><rect x="12" y="11.4" width="1.4" height="3" fill="#0a2a66"/></svg>
<div class="vs" style="left:228px;top:466px;background:#f0f0f0"></div>
<div class="t g" style="left:263.7px;top:467px">Wallac LANCE Test Plate HTS 662</div>
<div class="t gt" style="left:450.5px;top:467px">LANCE - Time-resolved Fluorescence</div>
<div class="t g" style="left:637px;top:467px">Yes</div>
<div class="t gb" style="left:717.6px;top:467px">Installation</div>
<div class="t gd" style="left:798px;top:467px">10/30/2025 1:04:53 PM</div>
<div class="rl" style="top:496px"></div>
<svg class="a" style="left:207px;top:480px;overflow:visible" width="17" height="16" viewBox="0 0 17 16"><ellipse cx="9" cy="8.3" rx="8.2" ry="8.8" fill="url(#glow)"/><ellipse cx="8.8" cy="8.6" rx="6.2" ry="6.3" fill="#700000"/><ellipse cx="8.6" cy="9.6" rx="5.5" ry="4.9" fill="url(#red)"/><ellipse cx="8.6" cy="5.3" rx="3.9" ry="3.3" fill="url(#blue)"/><path d="M11.3 10.2V8.9a1.65 1.65 0 0 1 3.3 0V10.2" fill="none" stroke="#0a2a66" stroke-width="1.1"/><rect x="8.6" y="10.2" width="8" height="5.4" fill="url(#lockg)" stroke="#082868" stroke-width="1"/><rect x="12" y="11.4" width="1.4" height="3" fill="#0a2a66"/></svg>
<div class="vs" style="left:228px;top:483px;background:#f0f0f0"></div>
<div class="t g" style="left:263.7px;top:484px">LANCE Eu/APC Dual 662</div>
<div class="t gt" style="left:450.5px;top:484px">LANCE - Time-resolved Fluorescence</div>
<div class="t g" style="left:637px;top:484px">Yes</div>
<div class="t gb" style="left:717.6px;top:484px">Installation</div>
<div class="t gd" style="left:798px;top:484px">10/30/2025 1:04:53 PM</div>
<div class="rl" style="top:513px"></div>
<svg class="a" style="left:207px;top:497px;overflow:visible" width="17" height="16" viewBox="0 0 17 16"><ellipse cx="9" cy="8.3" rx="8.2" ry="8.8" fill="url(#glow)"/><ellipse cx="8.8" cy="8.6" rx="6.2" ry="6.3" fill="#700000"/><ellipse cx="8.6" cy="9.6" rx="5.5" ry="4.9" fill="url(#red)"/><ellipse cx="8.6" cy="5.3" rx="3.9" ry="3.3" fill="url(#blue)"/><path d="M11.3 10.2V8.9a1.65 1.65 0 0 1 3.3 0V10.2" fill="none" stroke="#0a2a66" stroke-width="1.1"/><rect x="8.6" y="10.2" width="8" height="5.4" fill="url(#lockg)" stroke="#082868" stroke-width="1"/><rect x="12" y="11.4" width="1.4" height="3" fill="#0a2a66"/></svg>
<div class="vs" style="left:228px;top:500px;background:#f0f0f0"></div>
<div class="t g" style="left:263.7px;top:501px">LUM (cps)</div>
<div class="t gt" style="left:450.5px;top:501px">Luminescence</div>
<div class="t g" style="left:637px;top:501px">Yes</div>
<div class="t gb" style="left:717.6px;top:501px">Installation</div>
<div class="t gd" style="left:798px;top:501px">10/30/2025 1:04:53 PM</div>
<div class="rl" style="top:530px"></div>
<svg class="a" style="left:207px;top:514px;overflow:visible" width="17" height="16" viewBox="0 0 17 16"><ellipse cx="9" cy="8.3" rx="8.2" ry="8.8" fill="url(#glow)"/><ellipse cx="8.8" cy="8.6" rx="6.2" ry="6.3" fill="#700000"/><ellipse cx="8.6" cy="9.6" rx="5.5" ry="4.9" fill="url(#red)"/><ellipse cx="8.6" cy="5.3" rx="3.9" ry="3.3" fill="url(#blue)"/><path d="M11.3 10.2V8.9a1.65 1.65 0 0 1 3.3 0V10.2" fill="none" stroke="#0a2a66" stroke-width="1.1"/><rect x="8.6" y="10.2" width="8" height="5.4" fill="url(#lockg)" stroke="#082868" stroke-width="1"/><rect x="12" y="11.4" width="1.4" height="3" fill="#0a2a66"/></svg>
<div class="vs" style="left:228px;top:517px;background:#f0f0f0"></div>
<div class="t g" style="left:263.7px;top:518px">Wallac LUM Test Plate</div>
<div class="t gt" style="left:450.5px;top:518px">Luminescence</div>
<div class="t g" style="left:637px;top:518px">Yes</div>
<div class="t gb" style="left:717.6px;top:518px">Installation</div>
<div class="t gd" style="left:798px;top:518px">10/30/2025 1:04:53 PM</div>
<div class="rl" style="top:547px"></div>
<svg class="a" style="left:207px;top:531px;overflow:visible" width="17" height="16" viewBox="0 0 17 16"><ellipse cx="9" cy="8.3" rx="8.2" ry="8.8" fill="url(#glow)"/><ellipse cx="8.8" cy="8.6" rx="6.2" ry="6.3" fill="#700000"/><ellipse cx="8.6" cy="9.6" rx="5.5" ry="4.9" fill="url(#red)"/><ellipse cx="8.6" cy="5.3" rx="3.9" ry="3.3" fill="url(#blue)"/><path d="M11.3 10.2V8.9a1.65 1.65 0 0 1 3.3 0V10.2" fill="none" stroke="#0a2a66" stroke-width="1.1"/><rect x="8.6" y="10.2" width="8" height="5.4" fill="url(#lockg)" stroke="#082868" stroke-width="1"/><rect x="12" y="11.4" width="1.4" height="3" fill="#0a2a66"/></svg>
<div class="vs" style="left:228px;top:534px;background:#f0f0f0"></div>
<div class="t g" style="left:263.7px;top:535px">US LUM 384 (cps)</div>
<div class="t gt" style="left:450.5px;top:535px">Ultra Sensitive Luminescence</div>
<div class="t g" style="left:637px;top:535px">Yes</div>
<div class="t gb" style="left:717.6px;top:535px">Installation</div>
<div class="t gd" style="left:798px;top:535px">10/30/2025 1:04:53 PM</div>
<div class="rl" style="top:564px"></div>
<svg class="a" style="left:207px;top:548px;overflow:visible" width="17" height="16" viewBox="0 0 17 16"><ellipse cx="9" cy="8.3" rx="8.2" ry="8.8" fill="url(#glow)"/><ellipse cx="8.8" cy="8.6" rx="6.2" ry="6.3" fill="#700000"/><ellipse cx="8.6" cy="9.6" rx="5.5" ry="4.9" fill="url(#red)"/><ellipse cx="8.6" cy="5.3" rx="3.9" ry="3.3" fill="url(#blue)"/><path d="M11.3 10.2V8.9a1.65 1.65 0 0 1 3.3 0V10.2" fill="none" stroke="#0a2a66" stroke-width="1.1"/><rect x="8.6" y="10.2" width="8" height="5.4" fill="url(#lockg)" stroke="#082868" stroke-width="1"/><rect x="12" y="11.4" width="1.4" height="3" fill="#0a2a66"/></svg>
<div class="vs" style="left:228px;top:551px;background:#f0f0f0"></div>
<div class="t g" style="left:263.7px;top:552px">US LUM 1536 (cps)</div>
<div class="t gt" style="left:450.5px;top:552px">Ultra Sensitive Luminescence</div>
<div class="t g" style="left:637px;top:552px">Yes</div>
<div class="t gb" style="left:717.6px;top:552px">Installation</div>
<div class="t gd" style="left:798px;top:552px">10/30/2025 1:04:53 PM</div>
<div class="rl" style="top:581px"></div>
<svg class="a" style="left:207px;top:565px;overflow:visible" width="17" height="16" viewBox="0 0 17 16"><ellipse cx="9" cy="8.3" rx="8.2" ry="8.8" fill="url(#glow)"/><ellipse cx="8.8" cy="8.6" rx="6.2" ry="6.3" fill="#700000"/><ellipse cx="8.6" cy="9.6" rx="5.5" ry="4.9" fill="url(#red)"/><ellipse cx="8.6" cy="5.3" rx="3.9" ry="3.3" fill="url(#blue)"/><path d="M11.3 10.2V8.9a1.65 1.65 0 0 1 3.3 0V10.2" fill="none" stroke="#0a2a66" stroke-width="1.1"/><rect x="8.6" y="10.2" width="8" height="5.4" fill="url(#lockg)" stroke="#082868" stroke-width="1"/><rect x="12" y="11.4" width="1.4" height="3" fill="#0a2a66"/></svg>
<div class="vs" style="left:228px;top:568px;background:#f0f0f0"></div>
<div class="t g" style="left:263.7px;top:569px">Wallac ABS 340 Test Plate</div>
<div class="t gt" style="left:450.5px;top:569px">Absorbance</div>
<div class="t g" style="left:637px;top:569px">Yes</div>
<div class="t gb" style="left:717.6px;top:569px">Installation</div>
<div class="t gd" style="left:798px;top:569px">10/30/2025 1:04:53 PM</div>
<div class="rl" style="top:598px"></div>
<svg class="a" style="left:207px;top:582px;overflow:visible" width="17" height="16" viewBox="0 0 17 16"><ellipse cx="9" cy="8.3" rx="8.2" ry="8.8" fill="url(#glow)"/><ellipse cx="8.8" cy="8.6" rx="6.2" ry="6.3" fill="#700000"/><ellipse cx="8.6" cy="9.6" rx="5.5" ry="4.9" fill="url(#red)"/><ellipse cx="8.6" cy="5.3" rx="3.9" ry="3.3" fill="url(#blue)"/><path d="M11.3 10.2V8.9a1.65 1.65 0 0 1 3.3 0V10.2" fill="none" stroke="#0a2a66" stroke-width="1.1"/><rect x="8.6" y="10.2" width="8" height="5.4" fill="url(#lockg)" stroke="#082868" stroke-width="1"/><rect x="12" y="11.4" width="1.4" height="3" fill="#0a2a66"/></svg>
<div class="vs" style="left:228px;top:585px;background:#f0f0f0"></div>
<div class="t g" style="left:263.7px;top:586px">Wallac ABS 450 Test Plate</div>
<div class="t gt" style="left:450.5px;top:586px">Absorbance</div>
<div class="t g" style="left:637px;top:586px">Yes</div>
<div class="t gb" style="left:717.6px;top:586px">Installation</div>
<div class="t gd" style="left:798px;top:586px">10/30/2025 1:04:53 PM</div>
<div class="rl" style="top:615px"></div>
<svg class="a" style="left:207px;top:599px;overflow:visible" width="17" height="16" viewBox="0 0 17 16"><ellipse cx="9" cy="8.3" rx="8.2" ry="8.8" fill="url(#glow)"/><ellipse cx="8.8" cy="8.6" rx="6.2" ry="6.3" fill="#700000"/><ellipse cx="8.6" cy="9.6" rx="5.5" ry="4.9" fill="url(#red)"/><ellipse cx="8.6" cy="5.3" rx="3.9" ry="3.3" fill="url(#blue)"/><path d="M11.3 10.2V8.9a1.65 1.65 0 0 1 3.3 0V10.2" fill="none" stroke="#0a2a66" stroke-width="1.1"/><rect x="8.6" y="10.2" width="8" height="5.4" fill="url(#lockg)" stroke="#082868" stroke-width="1"/><rect x="12" y="11.4" width="1.4" height="3" fill="#0a2a66"/></svg>
<div class="vs" style="left:228px;top:602px;background:#f0f0f0"></div>
<div class="t g" style="left:263.7px;top:603px">Wallac ABS 492 Test Plate</div>
<div class="t gt" style="left:450.5px;top:603px">Absorbance</div>
<div class="t g" style="left:637px;top:603px">Yes</div>
<div class="t gb" style="left:717.6px;top:603px">Installation</div>
<div class="t gd" style="left:798px;top:603px">10/30/2025 1:04:53 PM</div>
<div class="rl" style="top:632px"></div>
<svg class="a" style="left:207px;top:616px;overflow:visible" width="17" height="16" viewBox="0 0 17 16"><ellipse cx="9" cy="8.3" rx="8.2" ry="8.8" fill="url(#glow)"/><ellipse cx="8.8" cy="8.6" rx="6.2" ry="6.3" fill="#700000"/><ellipse cx="8.6" cy="9.6" rx="5.5" ry="4.9" fill="url(#red)"/><ellipse cx="8.6" cy="5.3" rx="3.9" ry="3.3" fill="url(#blue)"/><path d="M11.3 10.2V8.9a1.65 1.65 0 0 1 3.3 0V10.2" fill="none" stroke="#0a2a66" stroke-width="1.1"/><rect x="8.6" y="10.2" width="8" height="5.4" fill="url(#lockg)" stroke="#082868" stroke-width="1"/><rect x="12" y="11.4" width="1.4" height="3" fill="#0a2a66"/></svg>
<div class="vs" style="left:228px;top:619px;background:#f0f0f0"></div>
<div class="t g" style="left:263.7px;top:620px">Europium</div>
<div class="t gt" style="left:450.5px;top:620px">DELFIA - Time-resolved Fluorescence</div>
<div class="t g" style="left:637px;top:620px">Yes</div>
<div class="t gb" style="left:717.6px;top:620px">Installation</div>
<div class="t gd" style="left:798px;top:620px">10/30/2025 1:04:53 PM</div>
<div class="rl" style="top:649px"></div>
<svg class="a" style="left:207px;top:633px;overflow:visible" width="17" height="16" viewBox="0 0 17 16"><ellipse cx="9" cy="8.3" rx="8.2" ry="8.8" fill="url(#glow)"/><ellipse cx="8.8" cy="8.6" rx="6.2" ry="6.3" fill="#700000"/><ellipse cx="8.6" cy="9.6" rx="5.5" ry="4.9" fill="url(#red)"/><ellipse cx="8.6" cy="5.3" rx="3.9" ry="3.3" fill="url(#blue)"/><path d="M11.3 10.2V8.9a1.65 1.65 0 0 1 3.3 0V10.2" fill="none" stroke="#0a2a66" stroke-width="1.1"/><rect x="8.6" y="10.2" width="8" height="5.4" fill="url(#lockg)" stroke="#082868" stroke-width="1"/><rect x="12" y="11.4" width="1.4" height="3" fill="#0a2a66"/></svg>
<div class="vs" style="left:228px;top:636px;background:#f0f0f0"></div>
<div class="t g" style="left:263.7px;top:637px">Wallac TRF Eu Test Plate</div>
<div class="t gt" style="left:450.5px;top:637px">DELFIA - Time-resolved Fluorescence</div>
<div class="t g" style="left:637px;top:637px">Yes</div>
<div class="t gb" style="left:717.6px;top:637px">Installation</div>
<div class="t gd" style="left:798px;top:637px">10/30/2025 1:04:53 PM</div>
<div class="rl" style="top:666px"></div>
<svg class="a" style="left:207px;top:650px;overflow:visible" width="17" height="16" viewBox="0 0 17 16"><ellipse cx="9" cy="8.3" rx="8.2" ry="8.8" fill="url(#glow)"/><ellipse cx="8.8" cy="8.6" rx="6.2" ry="6.3" fill="#700000"/><ellipse cx="8.6" cy="9.6" rx="5.5" ry="4.9" fill="url(#red)"/><ellipse cx="8.6" cy="5.3" rx="3.9" ry="3.3" fill="url(#blue)"/><path d="M11.3 10.2V8.9a1.65 1.65 0 0 1 3.3 0V10.2" fill="none" stroke="#0a2a66" stroke-width="1.1"/><rect x="8.6" y="10.2" width="8" height="5.4" fill="url(#lockg)" stroke="#082868" stroke-width="1"/><rect x="12" y="11.4" width="1.4" height="3" fill="#0a2a66"/></svg>
<div class="vs" style="left:228px;top:653px;background:#f0f0f0"></div>
<div class="t g" style="left:263.7px;top:654px">Wallac TRF Tb Test Plate</div>
<div class="t gt" style="left:450.5px;top:654px">DELFIA - Time-resolved Fluorescence</div>
<div class="t g" style="left:637px;top:654px">Yes</div>
<div class="t gb" style="left:717.6px;top:654px">Installation</div>
<div class="t gd" style="left:798px;top:654px">10/30/2025 1:04:53 PM</div>
<div class="rl" style="top:683px"></div>
<svg class="a" style="left:207px;top:667px;overflow:visible" width="17" height="16" viewBox="0 0 17 16"><ellipse cx="9" cy="8.3" rx="8.2" ry="8.8" fill="url(#glow)"/><ellipse cx="8.8" cy="8.6" rx="6.2" ry="6.3" fill="#700000"/><ellipse cx="8.6" cy="9.6" rx="5.5" ry="4.9" fill="url(#red)"/><ellipse cx="8.6" cy="5.3" rx="3.9" ry="3.3" fill="url(#blue)"/><path d="M11.3 10.2V8.9a1.65 1.65 0 0 1 3.3 0V10.2" fill="none" stroke="#0a2a66" stroke-width="1.1"/><rect x="8.6" y="10.2" width="8" height="5.4" fill="url(#lockg)" stroke="#082868" stroke-width="1"/><rect x="12" y="11.4" width="1.4" height="3" fill="#0a2a66"/></svg>
<div class="vs" style="left:228px;top:670px;background:#f0f0f0"></div>
<div class="t g" style="left:263.7px;top:671px">Wallac TRF Sm Test Plate</div>
<div class="t gt" style="left:450.5px;top:671px">DELFIA - Time-resolved Fluorescence</div>
<div class="t g" style="left:637px;top:671px">Yes</div>
<div class="t gb" style="left:717.6px;top:671px">Installation</div>
<div class="t gd" style="left:798px;top:671px">10/30/2025 1:04:53 PM</div>
<div class="rl" style="top:700px"></div>
<svg class="a" style="left:207px;top:684px;overflow:visible" width="17" height="16" viewBox="0 0 17 16"><ellipse cx="9" cy="8.3" rx="8.2" ry="8.8" fill="url(#glow)"/><ellipse cx="8.8" cy="8.6" rx="6.2" ry="6.3" fill="#700000"/><ellipse cx="8.6" cy="9.6" rx="5.5" ry="4.9" fill="url(#red)"/><ellipse cx="8.6" cy="5.3" rx="3.9" ry="3.3" fill="url(#blue)"/><path d="M11.3 10.2V8.9a1.65 1.65 0 0 1 3.3 0V10.2" fill="none" stroke="#0a2a66" stroke-width="1.1"/><rect x="8.6" y="10.2" width="8" height="5.4" fill="url(#lockg)" stroke="#082868" stroke-width="1"/><rect x="12" y="11.4" width="1.4" height="3" fill="#0a2a66"/></svg>
<div class="vs" style="left:228px;top:687px;background:#f0f0f0"></div>
<div class="t g" style="left:263.7px;top:688px">Wallac TRF Dy Test Plate</div>
<div class="t gt" style="left:450.5px;top:688px">DELFIA - Time-resolved Fluorescence</div>
<div class="t g" style="left:637px;top:688px">Yes</div>
<div class="t gb" style="left:717.6px;top:688px">Installation</div>
<div class="t gd" style="left:798px;top:688px">10/30/2025 1:04:53 PM</div>
<div class="rl" style="top:717px"></div>
<svg class="a" style="left:207px;top:701px;overflow:visible" width="17" height="16" viewBox="0 0 17 16"><ellipse cx="9" cy="8.3" rx="8.2" ry="8.8" fill="url(#glow)"/><ellipse cx="8.8" cy="8.6" rx="6.2" ry="6.3" fill="#700000"/><ellipse cx="8.6" cy="9.6" rx="5.5" ry="4.9" fill="url(#red)"/><ellipse cx="8.6" cy="5.3" rx="3.9" ry="3.3" fill="url(#blue)"/><path d="M11.3 10.2V8.9a1.65 1.65 0 0 1 3.3 0V10.2" fill="none" stroke="#0a2a66" stroke-width="1.1"/><rect x="8.6" y="10.2" width="8" height="5.4" fill="url(#lockg)" stroke="#082868" stroke-width="1"/><rect x="12" y="11.4" width="1.4" height="3" fill="#0a2a66"/></svg>
<div class="vs" style="left:228px;top:704px;background:#f0f0f0"></div>
<div class="t g" style="left:263.7px;top:705px">Europium Updated</div>
<div class="t gt" style="left:450.5px;top:705px">DELFIA - Time-resolved Fluorescence</div>
<div class="t g" style="left:637px;top:705px">Yes</div>
<div class="t gb" style="left:717.6px;top:705px">Installation</div>
<div class="t gd" style="left:798px;top:705px">10/30/2025 1:04:53 PM</div>
</body></html>
